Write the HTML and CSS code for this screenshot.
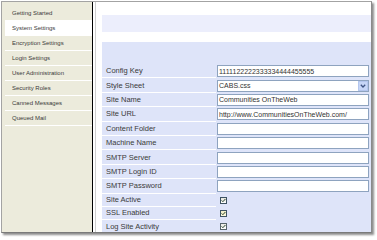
FILE: index.html
```html
<!DOCTYPE html>
<html>
<head>
<meta charset="utf-8">
<link rel="stylesheet" href="styles.css">
</head>
<body>
<div class="frame">
  <ul class="sidebar">
    <li class="nav-item">Getting Started</li>
    <li class="nav-item selected">System Settings</li>
    <li class="nav-item">Encryption Settings</li>
    <li class="nav-item">Login Settings</li>
    <li class="nav-item">User Administration</li>
    <li class="nav-item">Security Roles</li>
    <li class="nav-item">Canned Messages</li>
    <li class="nav-item">Queued Mail</li>
  </ul>
  <div class="content">
    <div class="title-bar"></div>
    <div class="form-area">
      <div class="row"><div class="lbl">Config Key</div><div class="field"><input class="txt" type="text" value="1111122222333334444455555"></div></div>
      <div class="row"><div class="lbl">Style Sheet</div><div class="field"><div class="select"><span class="sel-text">CABS.css</span><span class="sel-btn"><svg width="6" height="4" viewBox="0 0 6 4"><path d="M0.8 0.8 L3 3 L5.2 0.8" fill="none" stroke="#3f5483" stroke-width="1.3"/></svg></span></div></div></div>
      <div class="row"><div class="lbl">Site Name</div><div class="field"><input class="txt" type="text" value="Communities OnTheWeb"></div></div>
      <div class="row"><div class="lbl">Site URL</div><div class="field"><input class="txt" type="text" value="http://www.CommunitiesOnTheWeb.com/"></div></div>
      <div class="row"><div class="lbl">Content Folder</div><div class="field"><input class="txt" type="text" value=""></div></div>
      <div class="row"><div class="lbl">Machine Name</div><div class="field"><input class="txt" type="text" value=""></div></div>
      <div class="row"><div class="lbl">SMTP Server</div><div class="field"><input class="txt" type="text" value=""></div></div>
      <div class="row"><div class="lbl">SMTP Login ID</div><div class="field"><input class="txt" type="text" value=""></div></div>
      <div class="row"><div class="lbl">SMTP Password</div><div class="field"><input class="txt" type="text" value=""></div></div>
      <div class="row check"><div class="lbl">Site Active</div><div class="field"><span class="cb"><svg width="5" height="5" viewBox="0 0 5 5"><path d="M0.6 2.4 L1.9 3.7 L4.4 1" fill="none" stroke="#24402a" stroke-width="1"/></svg></span></div></div>
      <div class="row check"><div class="lbl">SSL Enabled</div><div class="field"><span class="cb hover"><svg width="5" height="5" viewBox="0 0 5 5"><path d="M0.6 2.4 L1.9 3.7 L4.4 1" fill="none" stroke="#24402a" stroke-width="1"/></svg></span></div></div>
      <div class="row check"><div class="lbl">Log Site Activity</div><div class="field"><span class="cb focus"><svg width="5" height="5" viewBox="0 0 5 5"><path d="M0.6 2.4 L1.9 3.7 L4.4 1" fill="none" stroke="#24402a" stroke-width="1"/></svg></span></div></div>
    </div>
  </div>
</div>
</body>
</html>
```
FILE: styles.css
```css
html, body {
  margin: 0;
  padding: 0;
  background: #ffffff;
}
body {
  width: 377px;
  height: 238px;
  overflow: hidden;
  font-family: "Liberation Sans", Arial, sans-serif;
}
.frame {
  margin: 1px 0 0 1px;
  width: 371px;
  height: 232px;
  box-sizing: border-box;
  border: 1px solid #a3a3a3;
  border-right-color: #8a8a8a;
  border-bottom-color: #7a7a7a;
  box-shadow: 2px 2px 2px rgba(0, 0, 0, 0.45);
  display: flex;
  overflow: hidden;
  background: #fff;
}
.sidebar {
  list-style: none;
  margin: 0;
  padding: 4px 0 0 0;
  width: 90px;
  flex: none;
  background: #ecebdc;
  border-right: 1px solid #000;
}
.nav-item {
  margin-left: 3px;
  height: 14px;
  line-height: 14px;
  border-bottom: 1px solid #ffffff;
  padding-left: 7px;
  font-size: 6px;
  color: #3a3a3a;
  white-space: nowrap;
}
.nav-item.selected {
  background: #ffffff;
}
.content {
  margin-left: 2px;
  flex: 1;
  border-left: 1px solid #cfcfcf;
  padding-left: 6px;
  display: flex;
  flex-direction: column;
  min-width: 0;
}
.title-bar {
  margin-top: 13px;
  height: 17px;
  background: #eceefc;
  flex: none;
}
.form-area {
  margin-top: 10px;
  flex: 1;
  background: #dee4f9;
  padding-top: 22px;
}
.row {
  display: flex;
  height: 14.4px;
}
.row.check {
  height: 13.3px;
}
.lbl {
  width: 114px;
  flex: none;
  box-sizing: border-box;
  padding-left: 4px;
  border-bottom: 1px solid #ffffff;
  display: flex;
  align-items: center;
  font-size: 7.5px;
  color: #3a3a3a;
  white-space: nowrap;
}
.field {
  flex: 1;
  display: flex;
  align-items: center;
  padding-left: 1px;
}
.txt {
  width: 152px;
  height: 12px;
  box-sizing: border-box;
  margin: 0;
  border: 1px solid #8ea3bf;
  padding: 0 0 0 1px;
  background: #fff;
  font-family: "Liberation Sans", Arial, sans-serif;
  font-size: 7px;
  color: #333;
  outline: none;
}
.select {
  width: 152px;
  height: 12px;
  box-sizing: border-box;
  border: 1px solid #8ea3bf;
  background: #fff;
  display: flex;
  align-items: center;
  justify-content: space-between;
  padding-left: 1px;
}
.sel-text {
  font-size: 7px;
  color: #333;
}
.sel-btn {
  width: 10px;
  height: 10px;
  box-sizing: border-box;
  background: #c7d6f7;
  border: 1px solid #b4c6ee;
  display: flex;
  align-items: center;
  justify-content: center;
}
.cb {
  margin-left: 3px;
  width: 7px;
  height: 7px;
  box-sizing: border-box;
  border: 1px solid #3c5262;
  background: linear-gradient(#e6e6dc, #ffffff);
  display: flex;
  align-items: center;
  justify-content: center;
}
.cb svg {
  display: block;
}
.cb.hover {
  background: linear-gradient(#f0eec6, #fbf8dc);
}
.cb.focus {
  border-color: #56656c;
  background: linear-gradient(#eaeae4, #ffffff);
}
```
